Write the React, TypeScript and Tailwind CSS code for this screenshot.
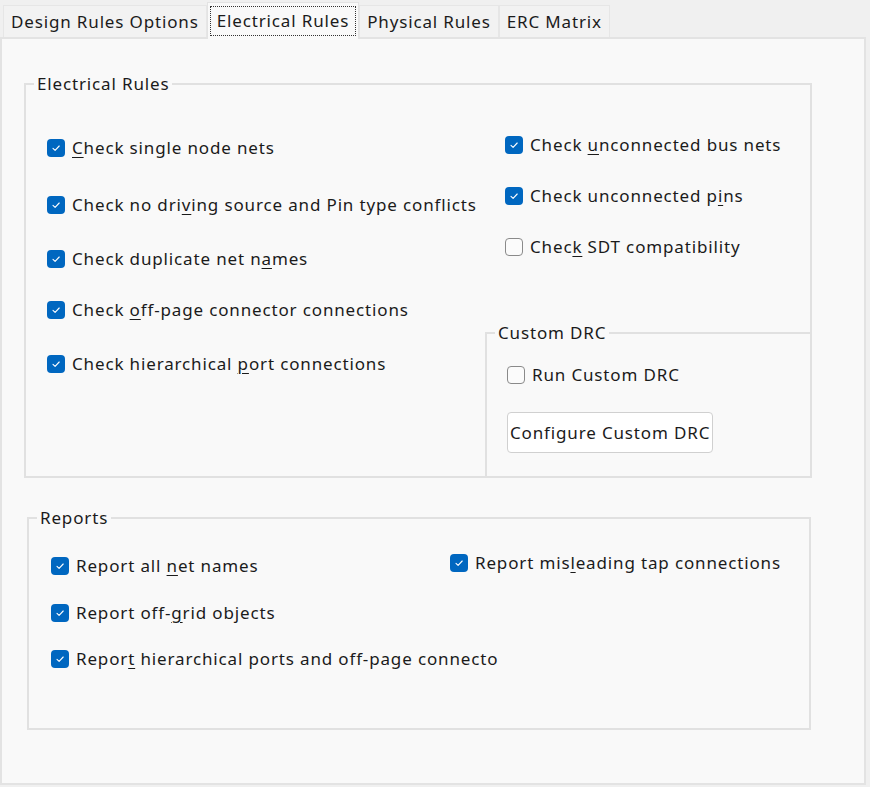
import React from "react";

type Label = [string, string, string];

function Box({ checked }: { checked: boolean }) {
  if (checked) {
    return (
      <span className="flex h-[18px] w-[18px] shrink-0 items-center justify-center rounded-[4px] bg-[#0067c0]">
        <svg width="12" height="12" viewBox="0 0 12 12" fill="none">
          <path d="M3 6.3 L5.1 8.3 L9.2 4" stroke="#ffffff" strokeWidth="1.1" strokeLinecap="round" strokeLinejoin="round" />
        </svg>
      </span>
    );
  }
  return <span className="h-[18px] w-[18px] shrink-0 rounded-[4px] border border-[#8a8a8a] bg-[#fbfbfb]" />;
}

function Check({ label, checked = true, className = "", clip = "" }: { label: Label; checked?: boolean; className?: string; clip?: string }) {
  return (
    <div className={`flex h-[22px] items-center gap-[7px] ${className}`}>
      <Box checked={checked} />
      <span className={`whitespace-nowrap ${clip}`}>
        {label[0]}
        {label[1] && <span className="underline underline-offset-[3px] decoration-1">{label[1]}</span>}
        {label[2]}
      </span>
    </div>
  );
}

function Legend({ children }: { children: React.ReactNode }) {
  return <legend className="ml-[8px] px-[3px] leading-[22px]">{children}</legend>;
}

const tabs = ["Design Rules Options", "Electrical Rules", "Physical Rules", "ERC Matrix"];

export default function App() {
  return (
    <div
      className="h-[787px] w-[870px] overflow-hidden bg-[#f0f0f0] text-[17px] leading-[22px] tracking-[0.85px] text-[#1b1b1b]"
      style={{ fontFamily: '"Noto Sans", "Open Sans", sans-serif' }}
    >
      {/* tab strip */}
      <div className="flex h-[37px] items-end pl-[3px]">
        {tabs.map((t, i) =>
          i === 1 ? (
            <div key={t} className="relative z-10 -mb-[2px] flex h-[37px] items-center border border-b-0 border-[#e3e3e3] bg-[#f9f9f9] px-[2px]">
              <span className="border border-dotted border-[#333] px-[6px] py-[3px]">{t}</span>
            </div>
          ) : (
            <div key={t} className="flex h-[32px] items-center border border-b-0 border-[#e6e6e6] bg-[#f2f2f2] px-[7px]">
              {t}
            </div>
          )
        )}
      </div>

      {/* panel */}
      <div className="h-[748px] w-[866px] border-2 border-[#e3e3e3] bg-[#f9f9f9] pt-[34px]">
        <fieldset className="ml-[22px] flex h-[405px] w-[788px] border-2 border-[#e1e1e1]">
          <Legend>Electrical Rules</Legend>
          <div className="flex w-[459px] flex-col pl-[21px]">
            <Check className="mt-[42px]" label={["", "C", "heck single node nets"]} />
            <Check className="mt-[35px]" label={["Check no dri", "v", "ing source and Pin type conflicts"]} />
            <Check className="mt-[32px]" label={["Check duplicate net n", "a", "mes"]} />
            <Check className="mt-[29px]" label={["Check ", "o", "ff-page connector connections"]} />
            <Check className="mt-[32px]" label={["Check hierarchical ", "p", "ort connections"]} />
          </div>
          <div className="flex flex-1 flex-col">
            <Check className="ml-[20px] mt-[39px]" label={["Check ", "u", "nconnected bus nets"]} />
            <Check className="ml-[20px] mt-[29px]" label={["Check unconnected p", "i", "ns"]} />
            <Check className="ml-[20px] mt-[29px]" checked={false} label={["Chec", "k", " SDT compatibility"]} />
            <fieldset className="-mb-[2px] -mr-[2px] mt-auto h-[156px] border-2 border-[#e1e1e1]">
              <Legend>Custom DRC</Legend>
              <div className="flex flex-col pl-[20px]">
                <Check className="mt-[20px]" checked={false} label={["Run Custom DRC", "", ""]} />
                <button className="mt-[26px] flex h-[41px] w-[206px] items-center overflow-hidden whitespace-nowrap rounded-[4px] border border-[#d0d0d0] bg-white pl-[2px] text-left">
                  Configure Custom DRC
                </button>
              </div>
            </fieldset>
          </div>
        </fieldset>

        <fieldset className="ml-[25px] mt-[29px] flex h-[223px] w-[784px] border-2 border-[#e1e1e1]">
          <Legend>Reports</Legend>
          <div className="flex w-[421px] flex-col pl-[22px]">
            <Check className="mt-[26px]" label={["Report all ", "n", "et names"]} />
            <Check className="mt-[25px]" label={["Report off-", "g", "rid objects"]} />
            <Check className="mt-[24px]" clip="w-[423px] shrink-0 overflow-hidden" label={["Repor", "t", " hierarchical ports and off-page connectors"]} />
          </div>
          <div className="flex flex-1 flex-col">
            <Check className="mt-[23px]" label={["Report mis", "l", "eading tap connections"]} />
          </div>
        </fieldset>
      </div>
    </div>
  );
}
